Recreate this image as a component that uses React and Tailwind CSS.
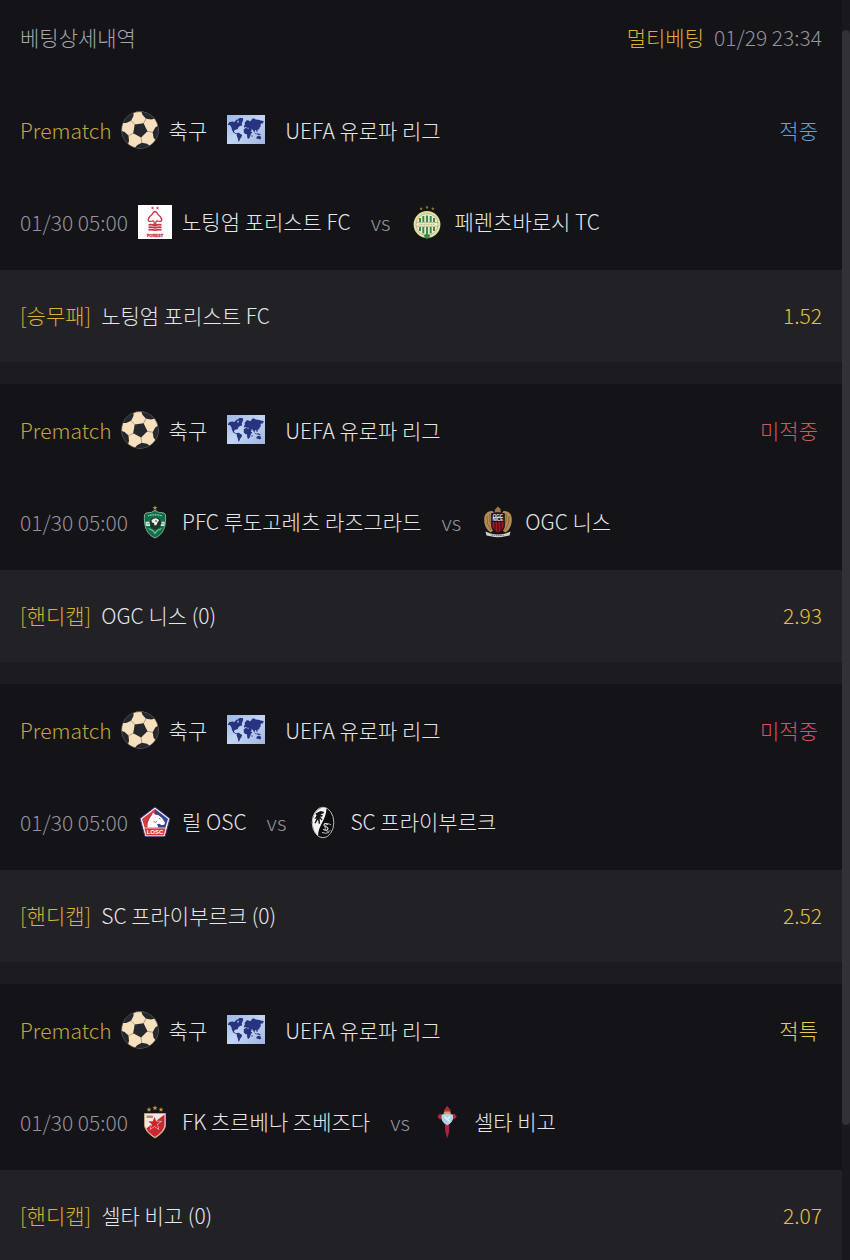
import React from 'react';

const polar = (r, deg) => {
  const a = (deg * Math.PI) / 180;
  return [19 + r * Math.cos(a), 19 + r * Math.sin(a)];
};
const toPoints = (list) => list.map(([x, y]) => `${x.toFixed(2)},${y.toFixed(2)}`).join(' ');
const seams = [-62, 10, 82, 154, 226];

function SoccerBall() {
  return (
    <svg viewBox="0 0 38 38" className="size-[38px] shrink-0" role="img" aria-label="축구공">
      <circle cx="19" cy="19" r="18.5" fill="#f7e0bd" />
      {seams.map((a) => (
        <g key={a}>
          <polygon
            fill="#24272d"
            points={toPoints([polar(12.8, a), polar(15.5, a - 19), polar(18.8, a - 24), polar(19, a), polar(18.8, a + 24), polar(15.5, a + 19)])}
          />
          <line
            x1={polar(6, a)[0]}
            y1={polar(6, a)[1]}
            x2={polar(13, a)[0]}
            y2={polar(13, a)[1]}
            stroke="#a8957b"
            strokeWidth="0.9"
          />
        </g>
      ))}
      <polygon fill="#24272d" points={toPoints(seams.map((a) => polar(7.6, a)))} />
      <circle cx="19" cy="19" r="18.4" fill="none" stroke="#54504b" strokeWidth="0.6" />
    </svg>
  );
}

function WorldMap() {
  return (
    <svg viewBox="0 0 38 29" className="h-[29px] w-[38px] shrink-0" role="img" aria-label="국제">
      <defs>
        <linearGradient id="sea" x1="0" y1="0" x2="1" y2="1">
          <stop offset="0" stopColor="#9db6e3" />
          <stop offset="0.5" stopColor="#c3d5f2" />
          <stop offset="1" stopColor="#9fb5df" />
        </linearGradient>
      </defs>
      <rect width="38" height="29" fill="url(#sea)" />
      <g fill="#27347f">
        <path d="M1 9l1.500-2 3-.5 2 .5 2-2.500 1.500.5-1 2.500 1.500 0 1.500-1 1.500 2 .8 2-1.800.3-2 1.200-.8 2-1.400.5-1.800.5-.5 1.700 1.300 1.200 1.200.4.8 1-1.800-.5-2.200-1.400-1.300-2.500-.7-3-1.500-1.800-1.800-.2z" />
        <path d="M10.500 4.500l2-1.500 3.200 0 .5 1.800-1 2.700-1.700 3-1.200-1.500-.5-2.500z" />
        <path d="M9.800 18l2-.3 1.900 1.300 1.500 1-.8 2.200-1.200 1.500-.9 2.300-.9.800-.5-3-1.200-3.300z" />
        <path d="M17 11l1-1.700-.5-1.300 2-2.500 1.700-.5 1 1.200 2-.7.7-1.500 1.800-.7 2 1.200 2.600.3 2.700.7 2.300.5.700 1.300-1.600.5.4 1.500-1.300-1-1 1.200.3 2-1 .8-.7 2-1.600.5.2 1.700-.9.500-.9-2-.8.3-.6 2.400-1-1.500-.6-1.500-1.700-.4.5 1.200-1.400 1-1-2.300-1.200-1.800-1 .6-1.600-1-1.400.7z" />
        <path d="M16.800 14.300l2-1.300 2.500.5 1.800.7.8 2.300 1.400.9-1.500 1.900-.5 1.700-.8 2-1.500.9-.8-2-.2-2.600-1.900-.3-1.400-1.700z" />
        <path d="M29.500 22l1.700-1.300 1.300 0 1.200.8.500 1.800-1.200 1.200-2-.8-1.700-.1z" />
        <path d="M27.500 17.500l2 1.200 1.500-.4 3 1.200-1 .5-2.500-.5-2-.5z" />
        <circle cx="25" cy="21" r=".7" />
      </g>
    </svg>
  );
}

const crest = 'size-[34px] shrink-0';

function Star({ x, y, r = 2, fill = '#c7a53c' }) {
  const points = Array.from({ length: 10 }, (_, i) => {
    const a = ((i * 36 - 90) * Math.PI) / 180;
    const d = i % 2 ? r * 0.42 : r;
    return [x + d * Math.cos(a), y + d * Math.sin(a)];
  });
  return <polygon points={toPoints(points)} fill={fill} />;
}

function Forest() {
  return (
    <svg viewBox="0 0 34 34" className={crest} role="img" aria-label="노팅엄 포리스트 엠블럼">
      <rect width="34" height="34" fill="#fff" />
      <Star x={14.5} y={3} r={1.8} fill="#cf3347" />
      <Star x={19.5} y={3} r={1.8} fill="#cf3347" />
      <path
        d="M17 6.500c-2 .3-2.500 1.800-3 3-1.800 1.300-3.500 3.300-3.800 5-.2 2 1.800 2.400 4.500 1.500.8-.2 1.500 0 1.500 2v1.500h1.600V18c0-2 .7-2.200 1.500-2 2.700.9 4.700.5 4.500-1.500-.3-1.700-2-3.700-3.800-5-.5-1.200-1-2.700-3-3z"
        fill="#fff"
        stroke="#c8364a"
        strokeWidth="1.300"
      />
      <path d="M10.500 19.800q3.200-.6 6.500.8 3.300-1.400 6.500-.8M10.500 22.300q3.200-.6 6.500.6 3.300-1.200 6.500-.6M10.500 24.800q3.200-.6 6.500.4 3.300-1 6.500-.4" fill="none" stroke="#c8364a" strokeWidth="1.700" />
      <text x="17" y="31.500" textAnchor="middle" fontSize="4" fontWeight="700" fill="#c8364a" stroke="#c8364a" strokeWidth="0.3" className="font-['Liberation_Sans_Narrow','Liberation_Sans',sans-serif]">FOREST</text>
    </svg>
  );
}

function Ferencvaros() {
  return (
    <svg viewBox="0 0 34 34" className={crest} role="img" aria-label="페렌츠바로시 엠블럼">
      <Star x={11.200} y={3.600} r={1.900} fill="#8f7c2b" />
      <Star x={17} y={2.400} r={1.900} fill="#8f7c2b" />
      <Star x={22.800} y={3.600} r={1.900} fill="#8f7c2b" />
      <circle cx="17" cy="19.500" r="13.400" fill="#e4e0a2" />
      <circle cx="17" cy="19.500" r="11" fill="#eeecd0" stroke="#a8ac6b" strokeWidth="0.7" />
      <path d="M10 13v4M13.300 11v6M17 10.500v6.500M20.700 11v6M24 13v4M10 22v4M13.300 22v6.500M17 22v8M20.700 22v6.500M24 22v4" stroke="#3c8a50" strokeWidth="2" />
      <path d="M6.300 17.500h21.400M6.300 21.300h21.400" stroke="#a3a767" strokeWidth="0.7" />
      <path d="M9 19.400h16" stroke="#b5bd7e" strokeWidth="1.400" strokeDasharray="1.300 1" />
      <path d="M14 30l3-1.500 3 1.500-.5 2.500-2.500 1.400-2.500-1.400z" fill="#398a4c" />
    </svg>
  );
}

function Ludogorets() {
  return (
    <svg viewBox="0 0 34 34" className={crest} role="img" aria-label="루도고레츠 엠블럼">
      <Star x={17} y={2.800} r={2.600} fill="#a98b4c" />
      <path d="M15 6.500l2-2 2 2z" fill="#a98b4c" />
      <path d="M17 5.500q3 2.500 9 2.500l1.500 1.500c.8 12-2 20-10.500 23.500C8.500 29.500 5.700 21.500 6.500 9.500L8 8q6 0 9-2.500z" fill="#0c704a" stroke="#8fb29b" strokeWidth="0.9" />
      <path d="M10 10.800q7-2 14 0" fill="none" stroke="#a9ccb3" strokeWidth="1.200" strokeDasharray="1.200 .5" />
      <path d="M7.500 16.800h4.500v4.200H7.800zM22.500 16.800h4.200L26.400 21h-3.900z" fill="#dfe9df" />
      <path d="M8.500 18.800h3M23 18.800h3" stroke="#3d8a68" strokeWidth="0.8" />
      <path d="M11.500 17.500l2-4 3.500-1 4 1 2.500 4-1.500 4.500-4.500 3-4.500-2z" fill="#1d332b" />
      <path d="M13.500 15.500q1-2 4-2.200 3 .2 3.500 2.200l-1.500 2-1 2.500-2 .5-.5-2.500-2-.5z" fill="#edf0e9" />
      <path d="M10.500 23.500l4.500 2.300 2 2.700 2-2.700 4.500-2.300" fill="none" stroke="#86b698" strokeWidth="1.100" />
      <circle cx="18" cy="16" r=".8" fill="#24352d" />
    </svg>
  );
}

function Nice() {
  return (
    <svg viewBox="0 0 34 34" className={crest} role="img" aria-label="OGC 니스 엠블럼">
      <path d="M11.500 6C6 5.500 3 9.500 3.200 15c0 5 2 9.500 6.500 12.500L14 24V9zM22.500 6c5.500-.5 8.500 3.500 8.300 9 0 5-2 9.500-6.500 12.500L20 24V9z" fill="#b48b55" />
      <path d="M6 11q-1 8 4 14M8.800 9q-1 8 2 12M28 11q1 8-4 14M25.200 9q1 8-2 12" fill="none" stroke="#7b5b35" strokeWidth="0.8" />
      <path d="M13.500 8.500l.5-4L17 1.500l2.500 2.500.5 4.500z" fill="#9c7946" />
      <path d="M10.800 8.800q6.200-2 12.400 0v12.700q-1 4.500-6.200 7-5.200-2.500-6.200-7z" fill="#a31728" stroke="#151013" strokeWidth="1.200" />
      <path d="M11 9q6-1.700 12 0v8H11z" fill="#18131a" />
      <path d="M14 17v9M17 17v11M20 17v9" stroke="#3a0f18" strokeWidth="1.200" />
      <text x="17" y="12.600" textAnchor="middle" fontSize="4.500" fontWeight="700" fill="#f0eded" className="font-['Liberation_Sans',sans-serif]">OGC</text>
      <text x="17" y="16.400" textAnchor="middle" fontSize="4.500" fontWeight="700" fill="#f0eded" className="font-['Liberation_Sans',sans-serif]">NICE</text>
      <path d="M4.500 26.500l5 2q7.500 1.800 15 0l5-2-1 4-4 .8q-7.500 2-15 0l-4-.8z" fill="#cfd0c8" />
      <path d="M10.500 30q6.500 1.200 13 0" fill="none" stroke="#6d6b64" strokeWidth="1" strokeDasharray="1.500 .7" />
    </svg>
  );
}

function Lille() {
  return (
    <svg viewBox="0 0 34 34" className={crest} role="img" aria-label="릴 OSC 엠블럼">
      <path d="M17 2l15 11.500L27 31.500H7L2 13.500z" fill="#f3eff4" stroke="#34357b" strokeWidth="1" strokeLinejoin="round" />
      <path d="M17 4L4 14l4 13 9-4z" fill="#d73a40" />
      <path d="M17 4l13 10-4 13-9-4z" fill="#34448f" />
      <path d="M9.500 22.500q-.5-5 2-9l2.500-3.500 1-2.500 2 2 3.500.8 3.500 2.700 3 4.500-.5 2-2.500.7-3-1.500-2 .5 1.500 3.300z" fill="#fff" />
      <path d="M8.500 19q1-6 5-10M15.500 16.500l2 .8 1.500-1M21 13.300l1.500.5" stroke="#a53a48" strokeWidth="0.8" fill="none" />
      <path d="M6 23h22l-2 7.800H8z" fill="#d9353f" stroke="#f6dfe1" strokeWidth="0.8" />
      <text x="17" y="29.300" textAnchor="middle" fontSize="6" fontWeight="700" fill="#fff" className="font-['Liberation_Sans',sans-serif]">LOSC</text>
    </svg>
  );
}

function Freiburg() {
  return (
    <svg viewBox="0 0 34 34" className={crest} role="img" aria-label="SC 프라이부르크 엠블럼">
      <ellipse cx="17" cy="17.500" rx="10.800" ry="15.300" fill="#0b0b0d" stroke="#b9babb" strokeWidth="1" />
      <path d="M20.500 3.200C12 .8 6.700 9 6.700 17.500c0 6 2.500 11 5.500 13.200C11.500 22 20.500 14 20.500 3.200z" fill="#f2f2f2" />
      <path d="M9.500 8.500l5-2.500 3.500.8-.5 1.700-3 .7 2.500 1.300-1 1.200-2-.2 2.500 3-1 .7-1.800-2 .3 5.300-1.200.5-.8-4.500-2.500 4-1-.5 2-4.500-2 .5 2-3.500z" fill="#16161a" />
      <path d="M22 19.500c-1.500-1.600-4.500-1-4 .9.500 1.600 3.800 1.100 4 3 .2 2.200-3.200 2.500-4.700.8" fill="none" stroke="#e5e5e5" strokeWidth="1.100" />
      <path d="M25 20c-3-2.600-5.800-.5-5.800 2.700s2.800 4.800 5.300 2.800M16 27.500q4 1.500 7 0" fill="none" stroke="#bdbdbd" strokeWidth="1" />
    </svg>
  );
}

function RedStar() {
  return (
    <svg viewBox="0 0 34 34" className={crest} role="img" aria-label="츠르베나 즈베즈다 엠블럼">
      <Star x={11} y={4.600} r={2.600} fill="#b8953a" />
      <Star x={17} y={3} r={2.700} fill="#b8953a" />
      <Star x={23} y={4.600} r={2.600} fill="#b8953a" />
      <path d="M6.500 8.500h21v12c-1 6-6 9.500-10.500 12.500C12.500 30 7.500 26.500 6.500 20.500z" fill="#efe9e6" stroke="#c9a06a" strokeWidth="1" />
      <path d="M26.500 9.500v11c-1 5-5 8.500-9.500 11.500-3.500-2.300-7-5-8.700-8.500z" fill="#cb2731" />
      <path d="M8.500 10.500H15V13H8.500z" fill="#cf7880" />
      <Star x={16.500} y={18.500} r={8} fill="#f4e9e8" />
      <Star x={16.500} y={18.500} r={6.700} fill="#cb2731" />
    </svg>
  );
}

function Celta() {
  return (
    <svg viewBox="0 0 34 34" className={crest} role="img" aria-label="셀타 비고 엠블럼">
      <path d="M14.800 17.500h4.700l-.5 9.500-1.800 6.500-1.800-6.500z" fill="#a9243f" />
      <path d="M13.800 5.500L17.200 1l3.600 4.500-1 4h-5z" fill="#b92741" />
      <path d="M7.500 11.500l2.500-3 1.800 1.500h10.700l1.800-1.500 2.500 3-2.500 3-2.300-1.200H12l-2 1.200z" fill="#a82b43" />
      <path d="M13.500 8l1.200-1.500h5L21 8l-.7 2h-6z" fill="#c0a36b" />
      <path d="M12 9.800h10.500v4.500q-1 3.800-5.200 5.500-4.300-1.700-5.300-5.500z" fill="#a9d3e8" stroke="#cfe2ea" strokeWidth="0.8" />
      <path d="M14.500 11.500l5 5M20 11.500l-2 2" stroke="#eff8fb" strokeWidth="1.200" />
    </svg>
  );
}

const bets = [
  { status: '적중', tone: 'text-[#5ba4dc]', home: '노팅엄 포리스트 FC', HomeCrest: Forest, away: '페렌츠바로시 TC', AwayCrest: Ferencvaros, market: '[승무패]', pick: '노팅엄 포리스트 FC', odds: '1.52' },
  { status: '미적중', tone: 'text-[#d4575b]', home: 'PFC 루도고레츠 라즈그라드', HomeCrest: Ludogorets, away: 'OGC 니스', AwayCrest: Nice, market: '[핸디캡]', pick: 'OGC 니스 (0)', odds: '2.93' },
  { status: '미적중', tone: 'text-[#d4575b]', home: '릴 OSC', HomeCrest: Lille, away: 'SC 프라이부르크', AwayCrest: Freiburg, market: '[핸디캡]', pick: 'SC 프라이부르크 (0)', odds: '2.52' },
  { status: '적특', tone: 'text-[#e6cc52]', home: 'FK 츠르베나 즈베즈다', HomeCrest: RedStar, away: '셀타 비고', AwayCrest: Celta, market: '[핸디캡]', pick: '셀타 비고 (0)', odds: '2.07' },
];

function Bet({ status, tone, home, HomeCrest, away, AwayCrest, market, pick, odds }) {
  return (
    <li>
      <div className="flex h-[93px] items-center pr-6 pb-[2px] pl-5">
        <span className="text-[#c2a83a]">Prematch</span>
        <span className="ml-[9px] flex"><SoccerBall /></span>
        <span className="ml-[10px]">축구</span>
        <span className="ml-5 flex"><WorldMap /></span>
        <span className="ml-5">UEFA 유로파 리그</span>
        <span className={`ml-auto ${tone}`}>{status}</span>
      </div>
      <div className="flex h-[93px] items-center px-5 pb-[3px]">
        <span className="text-[#939398]">01/30 05:00</span>
        <span className="ml-[10px] flex"><HomeCrest /></span>
        <span className="ml-[10px] pb-[3px]">{home}</span>
        <span className="ml-5 text-[#939398]">vs</span>
        <span className="ml-5 flex"><AwayCrest /></span>
        <span className="ml-[10px] pb-[3px]">{away}</span>
      </div>
      <div className="flex h-[92px] items-center bg-[#222226] px-5 pb-[2px]">
        <span className="text-[#d8b136]">{market}</span>
        <span className="ml-[10px]">{pick}</span>
        <span className="ml-auto text-[#e3c13a]">{odds}</span>
      </div>
    </li>
  );
}

export default function App() {
  return (
    <div className="flex h-screen bg-[#141418] font-['Noto_Sans_CJK_KR',sans-serif] text-[21px] leading-[30px] font-light whitespace-nowrap text-[#e6e6e9]">
      <main className="min-w-0 flex-1 overflow-y-auto [scrollbar-width:none]">
        <header className="flex h-[84px] items-center px-5 pb-[10px]">
          <h1 className="text-[#a6a6aa]">베팅상세내역</h1>
          <span className="ml-auto text-[#d8b136]">멀티베팅</span>
          <time className="ml-[10px] text-[#939398]">01/29 23:34</time>
        </header>
        <ul className="flex flex-col divide-y-[22px] divide-[#1c1c20]">
          {bets.map((bet) => (
            <Bet key={bet.away} {...bet} />
          ))}
        </ul>
      </main>
      <div className="w-2 shrink-0 bg-[#19191d] pt-[30px]" aria-hidden="true">
        <div className="h-[89%] rounded-full bg-[#323136]" />
      </div>
    </div>
  );
}
